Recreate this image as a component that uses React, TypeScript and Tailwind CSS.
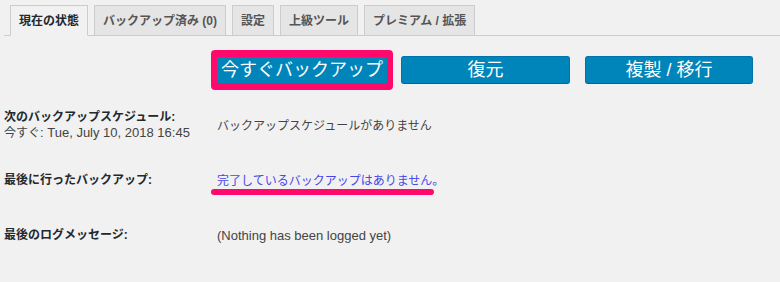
import React from 'react';

const tabs = ['現在の状態', 'バックアップ済み (0)', '設定', '上級ツール', 'プレミアム / 拡張'];

const font = { fontFamily: '"Liberation Sans", "Noto Sans CJK JP", sans-serif' };

function Tabs() {
	return (
		<div className="flex items-end gap-[6px] border-b border-[#cccccc] pl-[6px] ml-[4px] h-[36px]">
			{tabs.map((t, i) => (
				<div
					key={t}
					className={
						i === 0
							? 'h-[31px] px-[8px] flex items-center border border-[#cccccc] border-b-[#f1f1f1] -mb-px bg-[#f1f1f1] text-[#23282d] font-bold text-[12px]'
							: 'h-[30px] px-[8px] flex items-center border border-[#cccccc] border-b-0 bg-[#e5e5e5] text-[#555555] font-bold text-[12px]'
					}
				>
					{t}
				</div>
			))}
		</div>
	);
}

function Row({ label, children }: { label: React.ReactNode; children: React.ReactNode }) {
	return (
		<div className="flex items-center h-[55px]">
			<div className="w-[217px] shrink-0 pl-[4px] text-[12px] leading-[15px] text-[#23282d]">{label}</div>
			<div className="text-[12px] text-[#444444]">{children}</div>
		</div>
	);
}

export default function App() {
	return (
		<div className="w-[780px] h-[282px] bg-[#f1f1f1] overflow-hidden" style={font}>
			<Tabs />
			<div className="flex items-center h-[40px] mt-[14px] pl-[211px]">
				<div className="bg-[#ff0a6c] rounded-[4px] px-[6px] py-[7px]">
					<div className="w-[170px] h-[26px] bg-[#0085ba] flex items-center justify-center text-white text-[18px] leading-none">
						今すぐバックアップ
					</div>
				</div>
				<button className="ml-[8px] w-[169px] h-[28px] bg-[#0085ba] border border-[#0073aa] border-b-[#006799] rounded-[3px] text-white text-[18px] leading-none">
					復元
				</button>
				<button className="ml-[15px] w-[168px] h-[28px] bg-[#0085ba] border border-[#0073aa] border-b-[#006799] rounded-[3px] text-white text-[18px] leading-none">
					複製 / 移行
				</button>
			</div>
			<div className="mt-[8px]">
				<Row
					label={
						<>
							<div className="font-bold">次のバックアップスケジュール:</div>
							<div className="text-[#444444]">
								今すぐ<span className="text-[13px]">: Tue, July 10, 2018 16:45</span>
							</div>
						</>
					}
				>
					バックアップスケジュールがありません
				</Row>
				<Row label={<div className="font-bold">最後に行ったバックアップ:</div>}>
					<div className="relative">
						<span className="text-[#4646e6]">完了しているバックアップはありません。</span>
						<div className="absolute left-[-6px] top-[17px] w-[223px] h-[6px] rounded-full bg-[#ff0a6c]" />
					</div>
				</Row>
				<Row label={<div className="font-bold">最後のログメッセージ:</div>}>
					<span className="text-[13px]">(Nothing has been logged yet)</span>
				</Row>
			</div>
		</div>
	);
}
